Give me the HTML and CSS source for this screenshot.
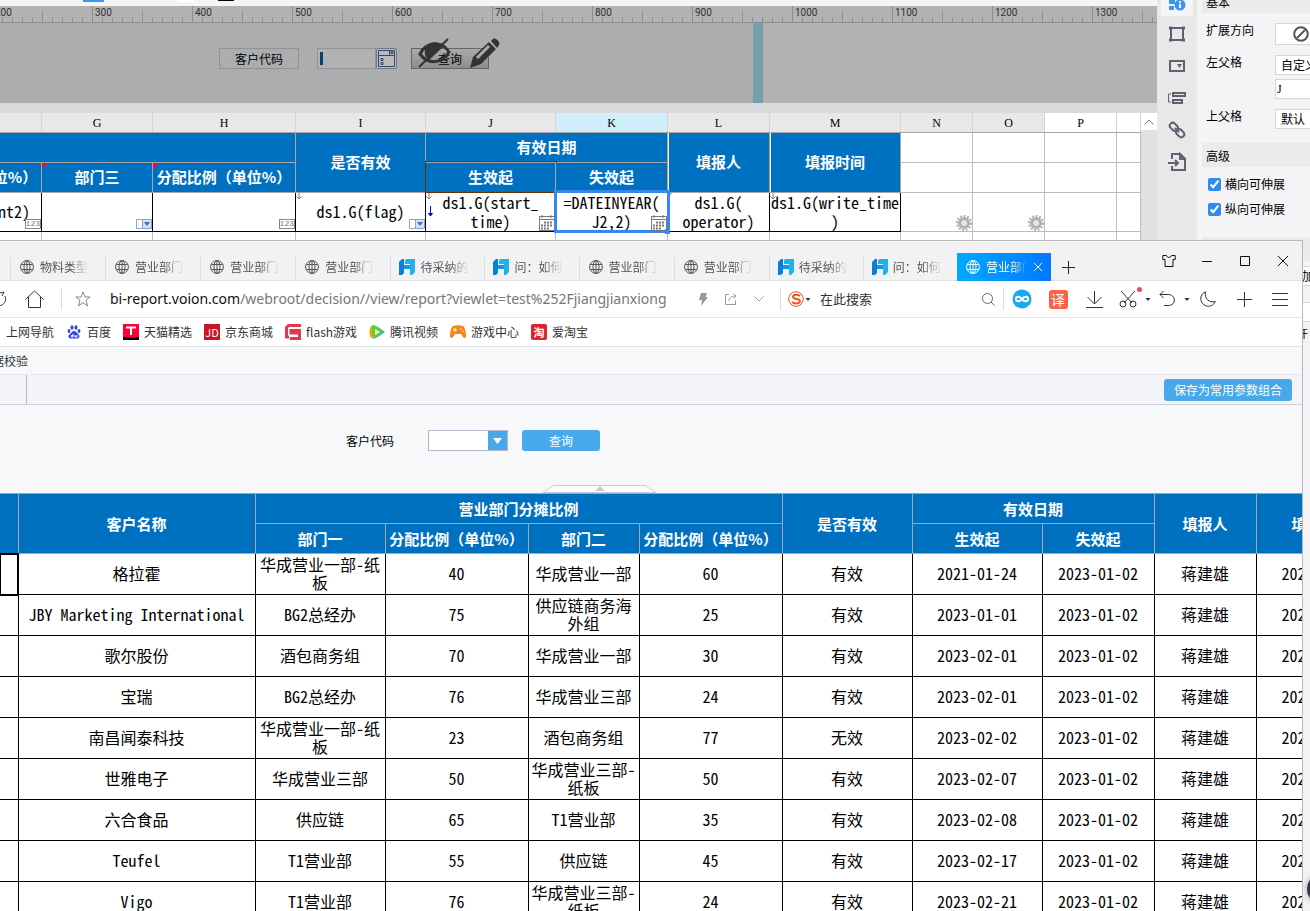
FILE: index.html
```html
<!DOCTYPE html>
<html lang="zh-CN">
<head>
  <meta charset="UTF-8">
  <meta name="viewport" content="width=device-width, initial-scale=1.0">
  <title>报表设计器</title>
  <link rel="stylesheet" href="styles.css">
</head>
<body>
  <!-- Shared icons -->
  <svg class="defs" width="0" height="0">
    <symbol id="globe" viewBox="0 0 14 14">
      <g fill="none" stroke="currentColor">
        <circle cx="7" cy="7" r="6.4"/>
        <ellipse cx="7" cy="7" rx="3" ry="6.4"/>
        <path d="M7 .6v12.8M1.3 4.5h11.4M1.3 9.5h11.4"/>
      </g>
    </symbol>
    <symbol id="fr" viewBox="0 0 16 16">
      <path fill="#0a7fd8" d="M0 3l3-3h2v6h4v4H5v4l-2 2H0z"/>
      <path fill="#23b0ee" d="M6 1l2-1h8v13l-3 3h-2V5H6z"/>
      <path fill="#0a9ae6" d="M5 6h6v4H5z"/>
    </symbol>
    <symbol id="drop" viewBox="0 0 16 10">
      <path fill="#fff" stroke="#8aa3cc" d="M.5.5h15v9H.5z"/>
      <path fill="#d3e0f6" stroke="#8aa3cc" d="M6.500.5h9v9h-9z"/>
      <path fill="#4d6ba3" d="M8 3h6l-3 4z"/>
    </symbol>
    <symbol id="cal" viewBox="0 0 16 16">
      <path fill="#fff" stroke="#777" d="M.5 1.500h15v14H.5zM.5 4.500h15"/>
      <path fill="none" stroke="#777" stroke-width="2" d="M3 .5v2M12 .5v2"/>
      <path fill="none" stroke="#777" stroke-width="2" stroke-dasharray="2 1" d="M5 7.500h9M2 10.500h12M2 13.500h9"/>
    </symbol>
    <symbol id="gear" viewBox="0 0 16 16">
      <circle cx="8" cy="8" r="7" fill="none" stroke="#b0b0b0" stroke-width="2" stroke-dasharray="2 1.600"/>
      <circle cx="8" cy="8" r="4.500" fill="#e6e6e6" stroke="#b0b0b0" stroke-width="3"/>
    </symbol>
    <symbol id="down" viewBox="0 0 6 7">
      <path fill="none" stroke="#808080" d="M3 0v6M.5 3.500L3 6l2.500-2.500"/>
    </symbol>
  </svg>

  <main class="designer">
    <section class="editor">
      <div class="toolbar-edge"><i class="on"></i><i class="white"></i><i class="black"></i></div>
      <div class="ruler">
        <span>200</span><span>300</span><span>400</span><span>500</span><span>600</span><span>700</span>
        <span>800</span><span>900</span><span>1000</span><span>1100</span><span>1200</span><span>1300</span>
      </div>
      <div class="param-pane">
        <form class="param-form">
          <label class="d-label" for="d-code">客户代码</label>
          <div class="d-combo">
            <input id="d-code" type="text">
            <button type="button" aria-label="下拉">
              <svg width="17" height="17" viewBox="0 0 17 17" fill="none" stroke="#2f4a78"><path d="M.5.5h16v16H.5zM.5 5.500h16M11.500.5v5M3 8.500h2v2H3zM3 12.500h2v2H3z"/><path fill="#2f4a78" d="M12.500 2h3L14 4z"/></svg>
            </button>
          </div>
          <div class="d-query">
            <button type="button">查询</button>
            <svg class="eye" width="34" height="30" viewBox="0 0 34 30"><path fill="none" stroke="#333" stroke-width="3" d="M2 16C8 4 24 2 31 14 24 26 10 27 2 16z"/><path fill="#333" d="M8 8c6-6 14-4 17 1L11 22C6 19 6 13 8 8z"/><path stroke="#333" stroke-width="2" d="M1 29L30 1"/></svg>
            <svg class="pencil" width="30" height="30" viewBox="0 0 30 30"><path fill="#333" d="M21 3l2-2c2-2 8 3 6 6l-2 3zM0 30l3-11L19 4l7 7L11 26z"/><path stroke="#aaa" stroke-width="3" d="M7 20L19 8"/></svg>
          </div>
        </form>
        <div class="pane-edge"></div>
      </div>

      <div class="sheet-wrap">
        <table class="sheet">
          <colgroup>
            <col class="c143"><col class="c111"><col class="c143"><col class="c130"><col class="c130"><col class="c112">
            <col class="c102"><col class="c131"><col class="c72"><col class="c72"><col class="c72"><col class="c24">
          </colgroup>
          <thead>
            <tr>
              <th></th><th>G</th><th>H</th><th>I</th><th>J</th><th class="current">K</th>
              <th>L</th><th>M</th><th>N</th><th>O</th><th class="plain">P</th><th class="plain"></th>
            </tr>
          </thead>
          <tbody>
            <tr class="r30">
              <td class="blue" colspan="3"></td>
              <td class="blue" rowspan="2">是否有效</td>
              <td class="blue" colspan="2">有效日期</td>
              <td class="blue white-left" rowspan="2">填报人</td>
              <td class="blue white-left" rowspan="2">填报时间</td>
              <td class="page-end"></td><td></td><td></td><td></td>
            </tr>
            <tr class="r30">
              <td class="blue">分配比例（单位%）</td>
              <td class="blue mark">部门三</td>
              <td class="blue mark">分配比例（单位%）</td>
              <td class="blue origin">生效起</td>
              <td class="blue">失效起</td>
              <td class="page-end"></td><td></td><td></td><td></td>
            </tr>
            <tr class="r39">
              <td class="box">ds1.G(percent2)<b class="num">123</b></td>
              <td class="box"><svg class="widget" width="16" height="10"><use href="#drop"/></svg></td>
              <td class="box"><b class="num">123</b></td>
              <td class="box">ds1.G(flag)<svg class="expand" width="6" height="7"><use href="#down"/></svg><svg class="widget" width="16" height="10"><use href="#drop"/></svg></td>
              <td class="box">ds1.G(start_<br>time)<svg class="expand" width="6" height="7"><use href="#down"/></svg><svg class="parent" width="6" height="12" viewBox="0 0 6 12"><path stroke="#00f" fill="#00f" d="M2.500 0v10M.5 7.500h4L2.500 10z"/></svg><svg class="widget" width="16" height="16"><use href="#cal"/></svg></td>
              <td class="box selected">=DATEINYEAR(<br>J2,2)<svg class="widget" width="16" height="16"><use href="#cal"/></svg></td>
              <td class="box teal">ds1.G(<br>operator)</td>
              <td class="box">ds1.G(write_time<br>)<svg class="expand" width="6" height="7"><use href="#down"/></svg></td>
              <td class="page-end"><svg class="widget" width="16" height="16"><use href="#gear"/></svg></td>
              <td><svg class="widget" width="16" height="16"><use href="#gear"/></svg></td>
              <td></td><td></td>
            </tr>
            <tr class="r30">
              <td></td><td></td><td></td><td></td><td></td><td></td><td></td><td></td>
              <td class="page-end"></td><td></td><td></td><td></td>
            </tr>
          </tbody>
        </table>
        <div class="scrollbar">
          <button type="button" aria-label="向上滚动"><svg width="10" height="6" viewBox="0 0 10 6"><path fill="none" stroke="#777" d="M.5 5.500L5 1l4.500 4.500"/></svg></button>
        </div>
      </div>
    </section>

    <nav class="side-tabs">
      <button type="button" class="active" aria-label="单元格元素"><svg width="18" height="18" viewBox="0 0 18 18"><path fill="#3b97f3" d="M1 1h6v7H1zM1 10h5v4H1z"/><circle cx="12" cy="9" r="5.500" fill="#3b97f3"/><path stroke="#fff" stroke-width="2" d="M12 5v2M12 8v4"/></svg></button>
      <button type="button" aria-label="单元格属性"><svg width="18" height="18" viewBox="0 0 18 18" fill="none" stroke="#5c6270" stroke-width="2"><path d="M3 3h12v12H3z"/><path stroke-width="3" d="M1 3h3M14 3h3M1 15h3M14 15h3"/></svg></button>
      <button type="button" aria-label="悬浮元素"><svg width="18" height="18" viewBox="0 0 18 18"><path fill="none" stroke="#5c6270" stroke-width="2" d="M2 4h14v10H2z"/><path fill="#5c6270" d="M9 7h5l-2.500 4z"/></svg></button>
      <button type="button" aria-label="控件设置"><svg width="18" height="18" viewBox="0 0 18 18" fill="none" stroke="#5c6270"><path d="M3 5H.5v8H3"/><path stroke-width="2" d="M5 4h12v3H5zM5 11h9v3H5z"/></svg></button>
      <button type="button" aria-label="条件属性"><svg width="18" height="18" viewBox="0 0 18 18" fill="none" stroke="#5c6270" stroke-width="2"><g transform="rotate(45 9 9)"><rect x="0" y="6" width="9" height="6" rx="3"/><rect x="9" y="6" width="9" height="6" rx="3"/><path d="M6 9h6"/></g></svg></button>
      <button type="button" aria-label="超级链接"><svg width="18" height="20" viewBox="0 0 18 20" fill="none" stroke="#5c6270" stroke-width="2"><path d="M4 7V2h8l5 5v11H4v-4M0 11h9M7 8l3 3-3 3"/><path fill="#5c6270" d="M12 2v5h5z"/></svg></button>
    </nav>

    <aside class="props">
      <h2 class="first">基本</h2>
      <div class="prop-grid">
        <span>扩展方向</span>
        <button type="button" class="field tall" aria-label="不扩展"><svg width="16" height="16" viewBox="0 0 16 16" fill="none" stroke="#555" stroke-width="2"><circle cx="8" cy="8" r="6.800"/><path d="M4 12l8-8"/></svg></button>
        <label for="left-parent">左父格</label>
        <div class="stack">
          <select id="left-parent" class="field"><option>自定义</option></select>
          <input class="field" type="text" value="J" aria-label="左父格单元格">
        </div>
        <label for="top-parent">上父格</label>
        <select id="top-parent" class="field"><option>默认</option></select>
      </div>
      <h2>高级</h2>
      <div class="checks">
        <label><input type="checkbox" checked>横向可伸展</label>
        <label><input type="checkbox" checked>纵向可伸展</label>
      </div>
      <h2>其他</h2>
      <div class="more">
        <button type="button" class="field">添加</button>
        <input class="field" type="text" aria-label="值">
        <span>允许</span>
      </div>
    </aside>
    <div class="floater"></div>
  </main>

  <div class="browser">
    <header class="tab-bar">
      <div class="tabs">
        <a href="#" class="tab"><svg width="14" height="14"><use href="#globe"/></svg><span>物料类型管</span></a>
        <a href="#" class="tab"><svg width="14" height="14"><use href="#globe"/></svg><span>营业部门分</span></a>
        <a href="#" class="tab"><svg width="14" height="14"><use href="#globe"/></svg><span>营业部门分</span></a>
        <a href="#" class="tab"><svg width="14" height="14"><use href="#globe"/></svg><span>营业部门分</span></a>
        <a href="#" class="tab wide"><svg width="16" height="16"><use href="#fr"/></svg><span>待采纳的问</span></a>
        <a href="#" class="tab wide"><svg width="16" height="16"><use href="#fr"/></svg><span>问：如何实</span></a>
        <a href="#" class="tab"><svg width="14" height="14"><use href="#globe"/></svg><span>营业部门</span></a>
        <a href="#" class="tab"><svg width="14" height="14"><use href="#globe"/></svg><span>营业部门</span></a>
        <a href="#" class="tab wide"><svg width="16" height="16"><use href="#fr"/></svg><span>待采纳的</span></a>
        <a href="#" class="tab wide"><svg width="16" height="16"><use href="#fr"/></svg><span>问：如何</span></a>
        <a href="#" class="tab active"><svg width="14" height="14"><use href="#globe"/></svg><span>营业部门</span><svg class="close" width="8" height="8" viewBox="0 0 8 8"><path stroke="#fff" d="M0 0l8 8M8 0L0 8"/></svg></a>
      </div>
      <button type="button" class="new-tab" aria-label="新标签页"><svg width="13" height="13" viewBox="0 0 13 13"><path stroke="#222" d="M6.500 0v13M0 6.500h13"/></svg></button>
      <div class="win-buttons">
        <button type="button" aria-label="皮肤"><svg width="14" height="12" viewBox="0 0 14 12"><path fill="none" stroke="#111" d="M4.500.5H.8v4H3v7h8v-7h2.200v-4H9.500C9 3 5 3 4.500.5z"/></svg></button>
        <button type="button" aria-label="最小化"><svg width="10" height="10" viewBox="0 0 10 10"><path stroke="#111" d="M0 5.500h10"/></svg></button>
        <button type="button" aria-label="最大化"><svg width="10" height="10" viewBox="0 0 10 10"><path fill="none" stroke="#111" d="M.5.5h9v9h-9z"/></svg></button>
        <button type="button" aria-label="关闭"><svg width="10" height="10" viewBox="0 0 10 10"><path stroke="#111" d="M0 0l10 10M10 0L0 10"/></svg></button>
      </div>
    </header>

    <div class="address-bar">
      <button type="button" class="w12" aria-label="刷新"><svg width="12" height="18" viewBox="0 0 12 18" fill="none" stroke="#333"><path d="M5 6c2 5-1 9-6 10M0 3l4-1-2 4"/></svg></button>
      <button type="button" class="w44" aria-label="主页"><svg width="19" height="18" viewBox="0 0 19 18"><path fill="none" stroke="#333" d="M.5 9.500L9.500 1l9 8.500M3.500 7v10.500h12V7"/></svg></button>
      <i class="sep near"></i>
      <button type="button" class="w32" aria-label="收藏"><svg width="16" height="16" viewBox="0 0 16 16"><path fill="none" stroke="#888" d="M8 1l2 5h5.200l-4.200 3.200L12.600 15 8 11.500 3.400 15 5 9.200.8 6H6z"/></svg></button>
      <a href="#" class="url"><b>bi-report.voion.com</b>/webroot/decision//view/report?viewlet=test%252Fjiangjianxiong</a>
      <button type="button" class="w28" aria-label="极速模式"><svg width="10" height="13" viewBox="0 0 10 13"><path fill="#999" d="M3 0h6L7.500 4H10L3 13l1-6H1z"/></svg></button>
      <button type="button" class="w28" aria-label="分享"><svg width="12" height="12" viewBox="0 0 12 12" fill="none" stroke="#999"><path d="M4 1.500H.5v10h10V7M4 8c0-3 2-5 7-5M8.500.5L11 3 8.500 5.500"/></svg></button>
      <button type="button" class="w28" aria-label="展开"><svg width="10" height="6" viewBox="0 0 10 6"><path fill="none" stroke="#999" d="M.5.5L5 5 9.500.5"/></svg></button>
      <i class="sep far"></i>
      <svg class="sogou" width="16" height="16" viewBox="0 0 16 16" fill="none" stroke="#f4511e"><circle cx="8" cy="8" r="7.300"/><path stroke-width="2" d="M12 5C10 3 5 3.500 5 6s7 1.500 7 4-5 3.500-8 1"/></svg>
      <svg class="caret" width="5" height="3" viewBox="0 0 5 3"><path fill="#333" d="M0 0h5L2.500 3z"/></svg>
      <input class="search" type="text" placeholder="在此搜索" aria-label="搜索">
      <button type="button" class="w28" aria-label="搜索"><svg width="13" height="13" viewBox="0 0 13 13" fill="none" stroke="#666"><circle cx="5.500" cy="5.500" r="5"/><path d="M9 9l3.500 3.500"/></svg></button>
      <i class="sep"></i>
      <button type="button" class="w36" aria-label="网盘"><svg width="20" height="20" viewBox="0 0 20 20"><circle cx="10" cy="10" r="9.500" fill="#1ba9ee"/><path fill="none" stroke="#fff" stroke-width="2" d="M10 10c-2-3-6-3-6 0s4 3 6 0 6-3 6 0-4 3-6 0z"/></svg></button>
      <button type="button" class="w36" aria-label="翻译"><span class="translate">译</span></button>
      <button type="button" class="w36" aria-label="下载"><svg width="17" height="17" viewBox="0 0 17 17"><path fill="none" stroke="#333" d="M8.500 0v12.500M1.500 6l7 7 7-7M0 16.500h17"/></svg></button>
      <button type="button" class="w32 dot" aria-label="截图"><svg width="18" height="18" viewBox="0 0 18 18" fill="none" stroke="#333"><path d="M2 1l11 12M16 1L5 13"/><circle cx="4" cy="14" r="3"/><circle cx="14" cy="14" r="3"/></svg></button>
      <svg class="caret" width="5" height="3" viewBox="0 0 5 3"><path fill="#333" d="M0 0h5L2.500 3z"/></svg>
      <button type="button" class="w32" aria-label="恢复"><svg width="17" height="16" viewBox="0 0 17 16"><path fill="none" stroke="#333" d="M1 3.500h8c8 0 9 11 0 11H5M4.500 0L1 3.500 4.500 7"/></svg></button>
      <svg class="caret" width="5" height="3" viewBox="0 0 5 3"><path fill="#333" d="M0 0h5L2.500 3z"/></svg>
      <button type="button" class="w36" aria-label="夜间模式"><svg width="16" height="16" viewBox="0 0 16 16"><path fill="none" stroke="#333" d="M5.500.8C2 2.500.5 5 .8 8.500 2 16 12 18 15.300 10.500 9 12.500 4 7 5.500.8z"/></svg></button>
      <button type="button" class="w36" aria-label="添加扩展"><svg width="15" height="15" viewBox="0 0 15 15"><path stroke="#333" d="M7.500 0v15M0 7.500h15"/></svg></button>
      <button type="button" class="w36" aria-label="菜单"><svg width="16" height="13" viewBox="0 0 16 13"><path stroke="#333" d="M0 .5h16M0 6.500h16M0 12.500h16"/></svg></button>
    </div>

    <nav class="bookmarks">
      <a href="#">上网导航</a>
      <a href="#"><svg width="16" height="16" viewBox="0 0 16 16" fill="#3245df"><ellipse cx="6" cy="3.500" rx="1.500" ry="2.200"/><ellipse cx="10" cy="3.500" rx="1.500" ry="2.200"/><ellipse cx="3" cy="7" rx="1.400" ry="2"/><ellipse cx="13" cy="7" rx="1.400" ry="2"/><path d="M8 7c2 0 3 2 4.500 3.500 2 2 .5 4-1.500 4H5c-2.500 0-3.500-2.500-1.500-4C5.500 9 6 7 8 7z"/><path stroke="#fff" fill="none" d="M7 10v3H5.500v-1.500H7M9 11v2h2v-2"/></svg>百度</a>
      <a href="#"><svg width="16" height="16" viewBox="0 0 16 16"><path fill="#ff0036" d="M0 0h16v14H0z"/><path d="M0 16v-3c5 1 11 1 16 0v3z"/><path fill="none" stroke="#fff" stroke-width="2" d="M3 3.500h10M8 3v8"/></svg>天猫精选</a>
      <a href="#"><i class="logo jd">JD</i>京东商城</a>
      <a href="#"><svg width="16" height="16" viewBox="0 0 16 16" fill="none" stroke="#e8354f" stroke-width="3"><path d="M16 1.500H3.500L1.500 3.500V13H4M16 6.500H6V9h8.500v5.500H5"/></svg>flash游戏</a>
      <a href="#"><svg width="16" height="16" viewBox="0 0 16 16"><path fill="#1ea5f4" d="M3 1c5 1 9 4 13 7-4 3-7 5-12 7z"/><path fill="#ff9a13" d="M2 2c-2 3-2 9 0 12l4-1V4z"/><path fill="#58d32a" d="M3 1c4 0 8 3 11 7-3 3-6 5-9 6-2-4-3-8-2-13z"/><path fill="#fff" d="M6 5l5 3-5 3z"/></svg>腾讯视频</a>
      <a href="#"><svg width="16" height="14" viewBox="0 0 16 14"><path fill="#f88414" d="M3 1c3-1 7-1 10 0 2 1 3 7 3 10 0 2-2 3-3 1l-2-3H5l-2 3c-1 2-3 1-3-1C0 8 1 2 3 1z"/><path stroke="#fff" d="M3 5h4M5 3v4M10 4h1.500M12 6h1.500"/></svg>游戏中心</a>
      <a href="#"><i class="logo tao">淘</i>爱淘宝</a>
    </nav>

    <div class="page-title">据校验</div>
    <div class="page-tools"><span></span><button type="button">保存为常用参数组合</button></div>

    <form class="query">
      <div class="query-row">
        <label for="code">客户代码</label>
        <div class="combo"><input id="code" type="text"><button type="button" aria-label="展开选项"><svg width="9" height="6" viewBox="0 0 9 6"><path fill="#fff" d="M0 0h9L4.500 6z"/></svg></button></div>
        <button type="button" class="go">查询</button>
      </div>
      <svg class="fold" width="114" height="8" viewBox="0 0 114 8"><path fill="#fff" stroke="#ccc" d="M0 7.500L11 .5h91l11 7z"/><path fill="#ccc" d="M57 1l5 5H52z"/></svg>
    </form>

    <div class="report-wrap">
      <table class="report">
        <colgroup>
          <col class="c18"><col class="c237"><col class="c130"><col class="c143"><col class="c111"><col class="c143">
          <col class="c130"><col class="c130"><col class="c112"><col class="c102"><col class="c131">
        </colgroup>
        <thead>
          <tr><th rowspan="2"></th><th rowspan="2">客户名称</th><th colspan="4">营业部门分摊比例</th><th rowspan="2">是否有效</th><th colspan="2">有效日期</th><th rowspan="2">填报人</th><th rowspan="2">填报时间</th></tr>
          <tr><th>部门一</th><th>分配比例（单位%）</th><th>部门二</th><th>分配比例（单位%）</th><th>生效起</th><th>失效起</th></tr>
        </thead>
        <tbody>
          <tr><td class="picked"></td><td>格拉霍</td><td>华成营业一部-纸板</td><td>40</td><td>华成营业一部</td><td>60</td><td>有效</td><td>2021-01-24</td><td>2023-01-02</td><td>蒋建雄</td><td>2023-02-01</td></tr>
          <tr><td></td><td>JBY Marketing International</td><td>BG2总经办</td><td>75</td><td>供应链商务海外组</td><td>25</td><td>有效</td><td>2023-01-01</td><td>2023-01-02</td><td>蒋建雄</td><td>2023-02-01</td></tr>
          <tr><td></td><td>歌尔股份</td><td>酒包商务组</td><td>70</td><td>华成营业一部</td><td>30</td><td>有效</td><td>2023-02-01</td><td>2023-01-02</td><td>蒋建雄</td><td>2023-02-01</td></tr>
          <tr><td></td><td>宝瑞</td><td>BG2总经办</td><td>76</td><td>华成营业三部</td><td>24</td><td>有效</td><td>2023-02-01</td><td>2023-01-02</td><td>蒋建雄</td><td>2023-02-01</td></tr>
          <tr><td></td><td>南昌闻泰科技</td><td>华成营业一部-纸板</td><td>23</td><td>酒包商务组</td><td>77</td><td>无效</td><td>2023-02-02</td><td>2023-01-02</td><td>蒋建雄</td><td>2023-02-01</td></tr>
          <tr><td></td><td>世雅电子</td><td>华成营业三部</td><td>50</td><td>华成营业三部-纸板</td><td>50</td><td>有效</td><td>2023-02-07</td><td>2023-01-02</td><td>蒋建雄</td><td>2023-02-01</td></tr>
          <tr><td></td><td>六合食品</td><td>供应链</td><td>65</td><td>T1营业部</td><td>35</td><td>有效</td><td>2023-02-08</td><td>2023-01-02</td><td>蒋建雄</td><td>2023-02-01</td></tr>
          <tr><td></td><td>Teufel</td><td>T1营业部</td><td>55</td><td>供应链</td><td>45</td><td>有效</td><td>2023-02-17</td><td>2023-01-02</td><td>蒋建雄</td><td>2023-02-01</td></tr>
          <tr><td></td><td>Vigo</td><td>T1营业部</td><td>76</td><td>华成营业三部-纸板</td><td>24</td><td>有效</td><td>2023-02-21</td><td>2023-01-02</td><td>蒋建雄</td><td>2023-02-01</td></tr>
        </tbody>
      </table>
    </div>
  </div>
</body>
</html>
```
FILE: styles.css
```css
* {
  box-sizing: border-box;
}
body {
  margin: 0;
  height: 100vh;
  overflow: hidden;
  position: relative;
  font-family: "Noto Sans CJK SC", sans-serif;
  font-size: 12px;
  line-height: 18px;
  color: #000;
  background: #f4f4f7;
}
button, input, select {
  font: inherit;
  color: inherit;
  margin: 0;
  padding: 0;
  border: 0;
  border-radius: 0;
  background: none;
}
a {
  color: inherit;
  text-decoration: none;
}
svg {
  display: block;
  flex: none;
}
.defs {
  position: absolute;
}

/* Report designer */
.designer {
  display: flex;
  height: 100%;
}
.editor {
  flex: 1;
  min-width: 0;
  overflow: hidden;
  background: #fff;
}
.toolbar-edge {
  display: flex;
  height: 6px;
  padding-left: 83px;
  background: #f4f5f8;
}
.toolbar-edge i {
  height: 2px;
}
.toolbar-edge .on {
  width: 21px;
  background: #3b97f3;
}
.toolbar-edge .white {
  width: 16px;
  margin-left: 74px;
  background: #fff;
}
.toolbar-edge .black {
  width: 16px;
  height: 1px;
  margin-left: 24px;
  background: #000;
}
.ruler {
  display: flex;
  height: 17px;
  margin-left: -8px;
  overflow: hidden;
  background: #b2b2b2;
  border-bottom: 1px solid #8e8e8e;
}
.ruler span {
  flex: none;
  width: 100px;
  padding-left: 2px;
  border-left: 1px solid #8e8e8e;
  font: 10px/14px Roboto, sans-serif;
  color: #333;
  background:
    linear-gradient(#8e8e8e, #8e8e8e) 49px 100% / 1px 11px no-repeat,
    repeating-linear-gradient(90deg, transparent 0 9px, #8e8e8e 9px 10px) 0 100% / 100% 5px no-repeat;
}
.param-pane {
  display: flex;
  height: 80px;
  background: #b2b2b2;
}
.param-form {
  display: flex;
  align-items: flex-start;
  width: 753px;
  padding: 25px 0 0 219px;
  background: #acadaf;
}
.pane-edge {
  width: 10px;
  background: #73a0ab;
}
.d-label {
  width: 80px;
  height: 21px;
  border: 1px solid #929294;
  text-align: center;
  line-height: 19px;
}
.d-combo {
  display: flex;
  margin-left: 18px;
}
.d-combo input {
  width: 59px;
  height: 21px;
  border: 1px solid #929294;
  background: linear-gradient(#0d3f6b, #0d3f6b) 2px 3px / 3px 13px no-repeat #b2b2b2;
}
.d-combo button {
  width: 21px;
  height: 21px;
  padding-left: 1px;
  border: 1px solid #777;
  border-radius: 2px;
  background: #bbb;
}
.d-query {
  position: relative;
  margin-left: 14px;
}
.d-query button {
  width: 78px;
  height: 21px;
  border: 1px solid #666;
  background: linear-gradient(#aaa, #8d8d8d);
  line-height: 17px;
}
.eye {
  position: absolute;
  left: 7px;
  top: -10px;
}
.pencil {
  position: absolute;
  left: 59px;
  top: -10px;
}
.sheet-wrap {
  display: flex;
  border-top: 10px solid #dadadc;
}
/* scrolled so that column F is partly out of view */
.sheet {
  flex: none;
  width: 1242px;
  margin-left: -102px;
}
.sheet, .report {
  table-layout: fixed;
  border-collapse: collapse;
}
.c18 { width: 18px; }
.c24 { width: 24px; }
.c72 { width: 72px; }
.c102 { width: 102px; }
.c111 { width: 111px; }
.c112 { width: 112px; }
.c130 { width: 130px; }
.c131 { width: 131px; }
.c143 { width: 143px; }
.c237 { width: 237px; }
.sheet th {
  height: 19px;
  padding: 3px 0 0;
  border-right: 1px solid #d3d4da;
  border-bottom: 1px solid #a6a6a6;
  background: #e8e8e8;
  font: 12px/15px "Liberation Serif", serif;
}
.sheet .current {
  background: #d0effa;
}
.sheet .plain {
  background: #fff;
}
.sheet td {
  position: relative;
  padding: 0;
  border: 1px solid #bcbcbc;
  text-align: center;
  white-space: nowrap;
}
.r30 {
  height: 30px;
}
.r39 {
  height: 39px;
}
.sheet .blue, .report th {
  background: #0070c0;
  border: 1px solid #a6a6a6;
  color: #fff;
  font-size: 15px;
  font-weight: bold;
}
.sheet .white-left {
  box-shadow: inset 1px 0 #fff;
}
.sheet .box {
  border: 1px solid #000;
  font: 16px/19px "Noto Sans Mono CJK SC", "Noto Sans CJK SC", monospace;
}
.sheet .page-end {
  border-right: 1px dashed #000;
}
.sheet .origin {
  outline: 1px solid #663300;
}
.mark::before, .teal::before {
  content: "";
  position: absolute;
  left: 0;
  top: 0;
  border: 3px solid transparent;
  border-top-color: #f03;
  border-left-color: #f03;
}
.teal::before {
  border-width: 2px;
  border-top-color: #00c8a0;
  border-left-color: #00c8a0;
}
.sheet .selected {
  outline: 3px solid #3688f0;
  outline-offset: -1px;
  z-index: 1;
}
.selected::after {
  content: "";
  position: absolute;
  right: -3px;
  bottom: -3px;
  width: 5px;
  height: 5px;
  background: #3688f0;
}
.widget, .num {
  position: absolute;
  right: 0;
  bottom: 2px;
}
.widget[height="16"] {
  bottom: 0;
}
.num {
  height: 10px;
  border: 1px solid #888;
  background: #fff;
  font: 8px/8px "Liberation Mono", monospace;
  color: #777;
}
.expand {
  position: absolute;
  left: 0;
  top: 0;
}
.parent {
  position: absolute;
  left: 2px;
  top: 13px;
}
.scrollbar {
  flex: 1;
  background: #e1e1e1;
}
.scrollbar button {
  display: grid;
  place-items: center;
  width: 100%;
  height: 17px;
  background: #fff;
}
.side-tabs {
  width: 40px;
  margin-top: -11px;
  padding: 0 4px;
  background: #e8e8e8;
}
.side-tabs button {
  display: grid;
  place-items: center;
  width: 32px;
  height: 32px;
}
.side-tabs .active {
  height: 27px;
  margin-bottom: 2px;
  padding-top: 5px;
  background: #f4f5f8;
}

/* Properties */
.props {
  width: 113px;
  padding-left: 5px;
  overflow: hidden;
}
.props h2 {
  height: 24px;
  margin: 0;
  padding-left: 4px;
  background: #ebebeb;
  font-size: 12px;
  font-weight: normal;
  line-height: 25px;
}
.props .first {
  margin-top: -11px;
}
.prop-grid {
  display: grid;
  grid-template-columns: 69px 120px;
  row-gap: 10px;
  padding: 10px 0 14px 4px;
  line-height: 14px;
}
.field {
  width: 120px;
  height: 20px;
  padding-left: 5px;
  border: 1px solid #d4d4da;
  background: #fff;
  text-align: left;
}
.stack .field + .field {
  margin-top: 4px;
  padding-left: 1px;
  font-family: "Liberation Serif", serif;
}
select.field {
  appearance: none;
}
.tall {
  height: 22px;
  padding-left: 17px;
}
.stack {
  display: flex;
  flex-direction: column;
}
.checks {
  display: flex;
  flex-direction: column;
  gap: 7px;
  padding: 8px 0 19px 6px;
}
.checks label {
  display: flex;
  align-items: center;
  gap: 4px;
  white-space: nowrap;
}
.checks input {
  width: 13px;
  height: 13px;
  accent-color: #2d8cf0;
}
.more {
  display: flex;
  flex-direction: column;
  gap: 16px;
  padding: 5px 0 0 82px;
}
.more span {
  margin-top: -14px;
}
.floater {
  position: absolute;
  right: -27px;
  bottom: 7px;
  width: 30px;
  height: 30px;
  border-radius: 50%;
  background: #33363f;
  box-shadow: 0 0 6px #999;
}

/* Browser window lying over the designer */
.browser {
  position: absolute;
  left: 0;
  right: 7px;
  top: 240px;
  bottom: 0;
  display: flex;
  flex-direction: column;
  overflow: hidden;
  border-top: 1px solid #b9b9bd;
  border-right: 1px solid #b9b9bd;
  background: #fff;
}
.browser > * {
  flex: none;
}
.browser button {
  display: grid;
  place-items: center;
}
.tab-bar {
  display: flex;
  height: 40px;
  padding-left: 10px;
  background: #f2f2f5;
  border-bottom: 1px solid #e0e1e5;
}
.tabs {
  display: flex;
  align-items: flex-end;
  width: 1041px;
}
.tab {
  display: flex;
  align-items: center;
  flex: 1;
  gap: 6px;
  height: 23px;
  padding: 0 0 3px 9px;
  border-left: 1px solid #dcdde1;
  color: #555;
}
.tab.wide {
  padding-left: 8px;
  gap: 5px;
}
.tab span {
  width: 49px;
  overflow: hidden;
  white-space: nowrap;
  mask-image: linear-gradient(90deg, #000 60%, transparent);
}
.tab.active {
  height: 28px;
  margin-bottom: -1px;
  padding: 0 0 0 9px;
  border: 0;
  color: #fff;
  background: linear-gradient(90deg, #00a8ff, #007aff);
}
.tab.active span {
  width: 42px;
}
.new-tab {
  width: 34px;
  height: 52px;
}
.win-buttons {
  display: flex;
  margin-left: auto;
  height: 40px;
}
.win-buttons button {
  width: 38px;
}
.address-bar {
  display: flex;
  align-items: center;
  height: 37px;
  padding-right: 4px;
  border-bottom: 1px solid #e2e3e6;
}
.address-bar > * {
  flex: none;
}
.w12 { width: 12px; }
.w28 { width: 28px; }
.w32 { width: 32px; }
.w36 { width: 36px; }
.w44 { width: 44px; }
.sep {
  width: 1px;
  height: 22px;
  margin-left: 1px;
  background: #dcdde1;
}
.sep.near {
  margin: 0 5px;
}
.sep.far {
  margin: 0 7px;
}
.url {
  width: 569px;
  margin: 0 10px 0 11px;
  overflow: hidden;
  white-space: nowrap;
  font: 14px/24px "Noto Sans", sans-serif;
  color: #777;
}
.url b {
  font-weight: normal;
  color: #111;
}
.caret {
  width: 7px;
  padding-left: 1px;
}
.address-bar .search {
  flex: 1;
  min-width: 0;
  margin-left: 9px;
  font-size: 13px;
}
.search::placeholder {
  color: #333;
  opacity: 1;
}
.translate {
  width: 19px;
  height: 19px;
  border-radius: 3px;
  background: #ff6043;
  color: #fff;
  font-size: 14px;
  line-height: 18px;
}
.dot {
  position: relative;
}
.dot::after {
  content: "";
  position: absolute;
  right: 2px;
  top: -3px;
  width: 5px;
  height: 5px;
  border-radius: 50%;
  background: #f04a5a;
}
.bookmarks {
  display: flex;
  gap: 12px;
  height: 29px;
  padding-left: 6px;
  border-bottom: 1px solid #e2e3e6;
  color: #333;
}
.bookmarks a {
  display: flex;
  align-items: center;
  gap: 5px;
}
.logo {
  width: 16px;
  height: 16px;
  background: #c81623;
  color: #fff;
  font: 11px/16px "Noto Sans CJK SC", sans-serif;
  text-align: center;
}
.tao {
  border-radius: 2px;
  background: #dc2230;
  font-weight: bold;
}
.page-title {
  height: 28px;
  margin-left: -8px;
  line-height: 27px;
  background: #f7f8fa;
  border-bottom: 1px solid #e6e8ec;
  color: #333;
}
.page-tools {
  display: flex;
  justify-content: space-between;
  height: 29px;
  background: #f3f4f8;
}
.page-tools span {
  width: 27px;
  border-right: 1px solid #b4b6cc;
}
.page-tools button {
  width: 128px;
  height: 22px;
  margin: 4px 10px 0 0;
  border-radius: 3px;
  background: #47a8ea;
  color: #fff;
}
.query {
  display: flex;
  flex-direction: column;
  justify-content: space-between;
  height: 89px;
  background: #f7f8fa;
  border-top: 1px solid #cfd0d8;
}
.query-row {
  display: flex;
  align-items: center;
  padding: 25px 0 0 346px;
}
.query-row label {
  width: 82px;
}
.combo {
  display: flex;
  width: 80px;
  height: 21px;
  border: 1px solid #b4b6cc;
  background: #fff;
}
.combo input {
  flex: 1;
  min-width: 0;
}
.combo button {
  width: 19px;
  background: #47a8ea;
}
.go {
  width: 78px;
  height: 21px;
  margin-left: 14px;
  border-radius: 3px;
  background: #47a8ea;
  color: #fff;
}
.fold {
  margin-left: 543px;
}
.report {
  width: 1387px;
}
.report th {
  height: 30px;
  padding: 0;
}
.report td {
  height: 41px;
  padding: 0 2px 2px;
  border: 1px solid #000;
  font: 16px/18px "Noto Sans Mono CJK SC", "Noto Sans CJK SC", monospace;
  text-align: center;
}
.report th:first-child, .report td:first-child {
  border-left: 0;
}
.report thead tr + tr th:first-child {
  border-left: 1px solid #a6a6a6;
}
.report tbody tr:first-child td {
  border-top-color: #a6a6a6;
}
.report .picked {
  outline: 2px solid #000;
  outline-offset: -1px;
}
```
